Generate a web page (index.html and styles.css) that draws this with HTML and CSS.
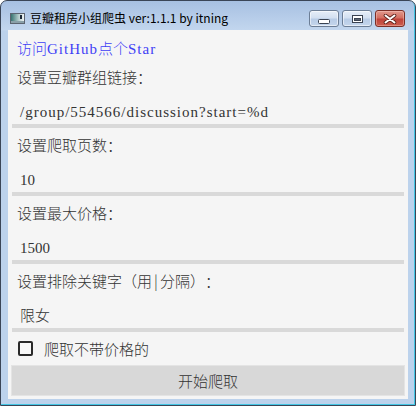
FILE: index.html
```html
<!DOCTYPE html>
<html lang="zh-CN">
<head>
<meta charset="utf-8">
<title>豆瓣租房小组爬虫</title>
<link rel="stylesheet" href="styles.css">
</head>
<body>
<div class="window">
  <div class="titlebar">
    <svg class="appicon" width="15" height="11" viewBox="0 0 15 11">
      <defs>
        <linearGradient id="ig" x1="0" y1="0" x2="1" y2="0">
          <stop offset="0" stop-color="#2f6d6a"/>
          <stop offset="0.6" stop-color="#b9cfcf"/>
          <stop offset="1" stop-color="#f4f7f7"/>
        </linearGradient>
      </defs>
      <rect x="0.5" y="0.5" width="14" height="10" fill="url(#ig)" stroke="#5c6470"/>
      <rect x="10" y="2" width="2" height="4" fill="#1e2a38"/>
      <rect x="1" y="8" width="13" height="2" fill="#8aa0a8"/>
    </svg>
    <span class="title">豆瓣租房小组爬虫 ver:1.1.1 by itning</span>
    <div class="caption">
      <div class="cbtn">
        <svg width="12" height="5" viewBox="0 0 12 5"><rect x="0.5" y="0.5" width="11" height="4" rx="1" fill="#fff" stroke="#3a4352"/></svg>
      </div>
      <div class="cbtn">
        <svg width="11" height="8" viewBox="0 0 11 8"><rect x="0.5" y="0.5" width="10" height="7" fill="#fff" stroke="#3a4352"/><rect x="2.5" y="3.5" width="6" height="2" fill="#5b6472" stroke="#3a4352"/></svg>
      </div>
      <div class="cbtn close">
        <svg width="14" height="10" viewBox="0 0 14 10"><path d="M2.5 1.5 L11.5 8.5 M11.5 1.5 L2.5 8.5" stroke="#5a2119" stroke-width="3.6" stroke-linecap="round"/><path d="M2.5 1.5 L11.5 8.5 M11.5 1.5 L2.5 8.5" stroke="#fff" stroke-width="2" stroke-linecap="round"/></svg>
      </div>
    </div>
  </div>
  <div class="client">
    <div class="link">访问<span class="lat">GitHub</span>点个<span class="lat">Star</span></div>
    <div class="field">
      <div class="label">设置豆瓣群组链接：</div>
      <div class="input"><span class="lat">/group/554566/discussion?start=%d</span></div>
    </div>
    <div class="field">
      <div class="label">设置爬取页数：</div>
      <div class="input"><span class="num">10</span></div>
    </div>
    <div class="field">
      <div class="label">设置最大价格：</div>
      <div class="input"><span class="num">1500</span></div>
    </div>
    <div class="field">
      <div class="label">设置排除关键字（用<span class="bar">|</span>分隔）：</div>
      <div class="input">限女</div>
    </div>
    <div class="check"><span class="box"></span><span>爬取不带价格的</span></div>
    <div class="button">开始爬取</div>
  </div>
</div>
</body>
</html>
```
FILE: styles.css
```css
html, body {
  margin: 0;
  padding: 0;
  background: #ffffff;
}

.window {
  width: 416px;
  height: 406px;
  box-sizing: border-box;
  border: 1px solid #3a4557;
  border-radius: 7px 7px 0 0;
  padding: 0 7px 6px 7px;
  display: flex;
  flex-direction: column;
  background: linear-gradient(#a7c0e2 0, #c2d6ee 29px, #bcd2ec 30px, #bcd2ec 100%);
  box-shadow: inset -1px -1px 0 #43c6e4;
}

.titlebar {
  height: 29px;
  display: flex;
  align-items: flex-start;
  flex: none;
}

.appicon {
  margin: 12px 0 0 2px;
  flex: none;
}

.title {
  margin: 7px 0 0 5px;
  font-family: "Noto Sans CJK SC", "Noto Sans", sans-serif;
  font-size: 12px;
  line-height: 20px;
  color: #000;
  white-space: nowrap;
}

.caption {
  margin: 9px 3px 0 auto;
  display: flex;
  gap: 3px;
}

.cbtn {
  width: 30px;
  height: 17px;
  box-sizing: border-box;
  border: 1px solid #6c7e96;
  border-radius: 3px;
  background: linear-gradient(#e6eef8 0, #d3e0f1 45%, #b8cce6 55%, #c4d6ec 100%);
  box-shadow: inset 0 0 0 1px rgba(255, 255, 255, 0.55);
  display: flex;
  align-items: center;
  justify-content: center;
}

.cbtn:first-child svg {
  margin-top: 5px;
}

.cbtn.close {
  border-color: #7b2f27;
  background: linear-gradient(#e1998d 0, #d36f62 45%, #c0433a 55%, #cc5e50 100%);
  box-shadow: inset 0 0 0 1px rgba(255, 210, 200, 0.4);
}

.client {
  flex: 1;
  background: #f5f5f5;
  padding: 6px 0 3px 0;
  display: flex;
  flex-direction: column;
  font-family: "Noto Sans CJK SC", sans-serif;
  font-weight: 300;
  font-size: 15px;
  color: #333;
  text-spacing-trim: space-all;
}

.lat {
  font-family: "Liberation Serif", "Noto Sans CJK SC", serif;
  font-weight: 400;
  letter-spacing: 1px;
}

.num {
  font-family: "Liberation Serif", "Noto Sans CJK SC", serif;
  font-weight: 400;
}

.bar {
  display: inline-block;
  width: 8px;
  text-align: center;
}

.link {
  height: 24px;
  line-height: 24px;
  padding-left: 9px;
  color: #3f3ff5;
  white-space: nowrap;
}

.field {
  display: flex;
  flex-direction: column;
}

.label {
  height: 34px;
  line-height: 34px;
  padding-left: 9px;
  white-space: nowrap;
}

.input {
  height: 30px;
  line-height: 34px;
  margin: 0 4px;
  padding-left: 8px;
  border-bottom: 4px solid #d9d9d9;
  white-space: nowrap;
}

.check {
  height: 32px;
  display: flex;
  align-items: center;
  padding-left: 10px;
  gap: 11px;
}

.box {
  width: 15px;
  height: 15px;
  box-sizing: border-box;
  border: 2px solid #2a2a2a;
  border-radius: 2px;
  background: #f8f8f8;
}

.button {
  margin: 1px 3px 0 3px;
  height: 31px;
  box-sizing: border-box;
  border: 1px solid #e4e4e4;
  background: #d8d8d8;
  display: flex;
  align-items: center;
  justify-content: center;
  color: #333;
}
```
